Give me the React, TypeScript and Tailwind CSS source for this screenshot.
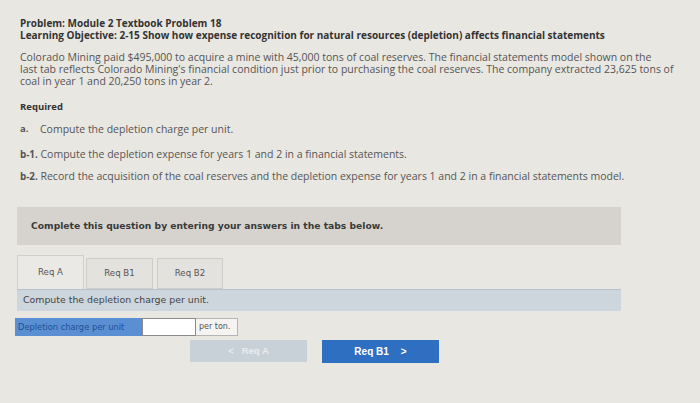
import React from "react";

export default function App() {
  return (
    <div className="w-[700px] h-[403px] overflow-hidden bg-[#e9e7e2] text-[#4a4a4a]" style={{ fontFamily: "'Open Sans', Lato, sans-serif" }}>
      <div className="pl-[20px] pr-[20px] pt-[17px]">
        <div className="font-bold text-[10px] leading-[12px] text-[#333]">Problem: Module 2 Textbook Problem 18</div>
        <div className="font-bold text-[10px] leading-[12px] text-[#333]">Learning Objective: 2-15 Show how expense recognition for natural resources (depletion) affects financial statements</div>
        <p className="mt-[10px] text-[10.5px] leading-[12px] text-[#555] whitespace-nowrap">
          Colorado Mining paid $495,000 to acquire a mine with 45,000 tons of coal reserves. The financial statements model shown on the
          <br />
          last tab reflects Colorado Mining's financial condition just prior to purchasing the coal reserves. The company extracted 23,625 tons of
          <br />
          coal in year 1 and 20,250 tons in year 2.
        </p>
        <div className="mt-[14px] font-bold text-[9.5px] leading-[12px] text-[#333]">Required</div>
        <div className="mt-[10px] flex text-[10.5px] leading-[12px] text-[#555]">
          <span className="font-bold w-[20px] text-[9.5px]">a.</span>
          <span>Compute the depletion charge per unit.</span>
        </div>
        <div className="mt-[13px] text-[10.5px] leading-[12px] text-[#555]">
          <span className="font-bold text-[9.8px]">b-1.</span> Compute the depletion expense for years 1 and 2 in a financial statements.
        </div>
        <div className="mt-[9px] text-[10.5px] leading-[12px] text-[#555]">
          <span className="font-bold text-[9.8px]">b-2.</span> Record the acquisition of the coal reserves and the depletion expense for years 1 and 2 in a financial statements model.
        </div>
      </div>

      <div className="ml-[17px] w-[604px] mt-[24px]" style={{ fontFamily: "'DejaVu Sans', Verdana, sans-serif" }}>
        <div className="h-[38px] bg-[#d6d3ce] flex items-center pl-[14px] text-[9.2px] font-bold text-[#3a3a3a]">
          Complete this question by entering your answers in the tabs below.
        </div>
        <div className="mt-[10px] flex items-end gap-[2px] h-[34px]">
          <div className="w-[67px] h-[34px] bg-[#ebe9e5] border border-[#d2d0cb] border-b-0 flex items-center justify-center text-[8.6px] text-[#555]">Req A</div>
          <div className="w-[67px] h-[31px] bg-[#e4e2de] border border-[#cfcdc8] flex items-center justify-center text-[8.6px] text-[#555]">Req B1</div>
          <div className="ml-[2px] w-[66px] h-[31px] bg-[#e4e2de] border border-[#cfcdc8] flex items-center justify-center text-[8.6px] text-[#555]">Req B2</div>
        </div>
        <div className="h-[22px] bg-[#cdd6dc] flex items-center pl-[6px] text-[9.4px] text-[#444] border-t border-[#b9c2c8]">
          Compute the depletion charge per unit.
        </div>
      </div>

      <div className="ml-[15px] mt-[7px] flex items-stretch h-[18px] text-[8.3px]" style={{ fontFamily: "'DejaVu Sans', Verdana, sans-serif" }}>
        <div className="w-[127px] bg-[#5a8fd3] text-[#1f4f96] flex items-center pl-[3px]">Depletion charge per unit</div>
        <div className="w-[54px] bg-white border border-[#8a8a8a]"></div>
        <div className="w-[42px] bg-[#f5f4f1] border border-[#b5b5b5] border-l-0 flex items-center pl-[3px] text-[#555] text-[8px]">per ton.</div>
      </div>

      <div className="ml-[190px] mt-[4px] flex gap-[15px]" style={{ fontFamily: "'Liberation Sans', Arial, sans-serif" }}>
        <div className="w-[117px] h-[22px] bg-[#c9d1d8] flex items-center justify-center text-[9.5px] font-bold text-[#e8ecef]">
          <span className="mr-[8px]">&lt;</span>Req A
        </div>
        <div className="w-[117px] h-[23px] bg-[#2e6fc2] flex items-center justify-center text-[10px] font-bold text-white">
          Req B1<span className="ml-[12px]">&gt;</span>
        </div>
      </div>
    </div>
  );
}
